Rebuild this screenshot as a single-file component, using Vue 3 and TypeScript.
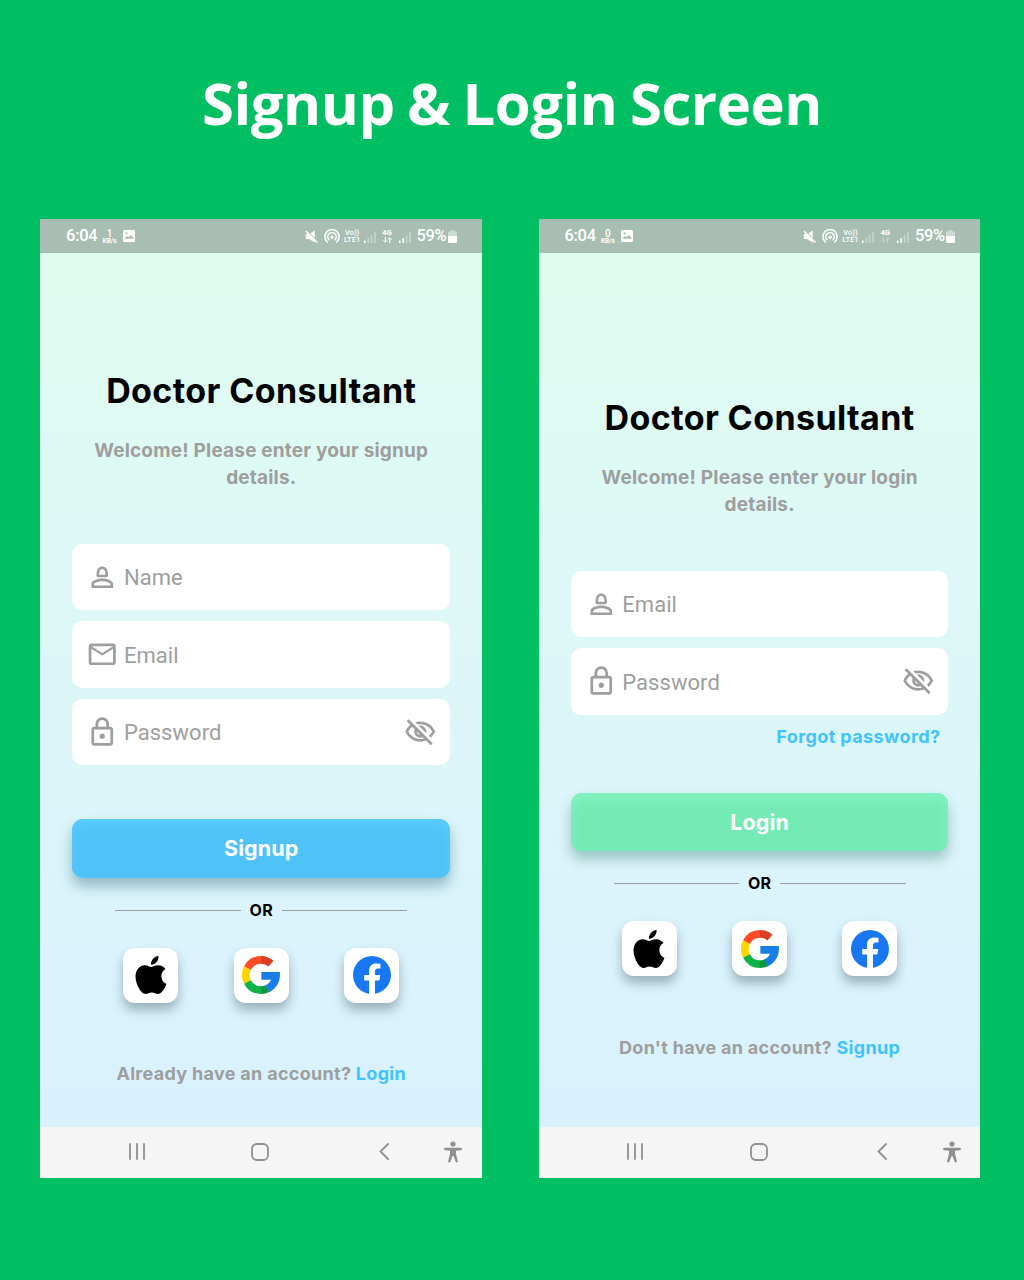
<script setup lang="ts">
interface Field {
  label: string
  icon: 'person' | 'mail' | 'lock'
  secret?: boolean
}

interface Screen {
  id: 'signup' | 'login'
  rate: string
  idleData: boolean
  subtitle: [string, string]
  fields: Field[]
  forgot?: string
  action: string
  question: string
  link: string
}

const screens: Screen[] = [
  {
    id: 'signup',
    rate: '1',
    idleData: false,
    subtitle: ['Welcome! Please enter your signup', 'details.'],
    fields: [
      { label: 'Name', icon: 'person' },
      { label: 'Email', icon: 'mail' },
      { label: 'Password', icon: 'lock', secret: true },
    ],
    action: 'Signup',
    question: 'Already have an account?',
    link: 'Login',
  },
  {
    id: 'login',
    rate: '0',
    idleData: true,
    subtitle: ['Welcome! Please enter your login', 'details.'],
    fields: [
      { label: 'Email', icon: 'person' },
      { label: 'Password', icon: 'lock', secret: true },
    ],
    forgot: 'Forgot password?',
    action: 'Login',
    question: "Don't have an account?",
    link: 'Signup',
  },
]

const glyphs: Record<Field['icon'], string> = {
  person:
    'M12 4C9.6 4 8.1 5.9 7.9 8.4L7.7 10.3C7.6 11.2 8.2 12 9.1 12h5.8c.9 0 1.5-.8 1.4-1.7l-.2-1.9C15.9 5.9 14.4 4 12 4zm0 1.9c1.3 0 2.1 1 2.2 2.6l.2 1.7H9.6l.2-1.7C9.9 6.9 10.700 5.900 12 5.900zM12 13c-2.700 0-8 1.340-8 4v3h16v-3c0-2.660-5.330-4-8-4zm6.100 5.100H5.900V17c0-.64 3.130-2.100 6.100-2.100s6.100 1.460 6.100 2.100v1.100z',
  mail: 'M22 6c0-1.100-.9-2-2-2H4c-1.100 0-2 .9-2 2v12c0 1.100.9 2 2 2h16c1.100 0 2-.9 2-2V6zm-2 0l-8 5-8-5h16zm0 12H4V8l8 5 8-5v10z',
  lock: 'M18 8h-1V6c0-2.760-2.240-5-5-5S7 3.240 7 6v2H6c-1.100 0-2 .9-2 2v10c0 1.100.9 2 2 2h12c1.100 0 2-.9 2-2V10c0-1.100-.9-2-2-2zM9 6c0-1.660 1.340-3 3-3s3 1.340 3 3v2H9V6zm9 14H6V10h12v10zm-6-3c1.100 0 2-.9 2-2s-.9-2-2-2-2 .9-2 2 .9 2 2 2z',
}
</script>

<template>
  <main class="page">
    <h1 class="title">Signup &amp; Login Screen</h1>
    <div class="phones">
      <section v-for="s in screens" :key="s.id" class="phone" :class="s.id">
        <header class="status">
          <span class="clock">6:04</span>
          <span class="rate"><b>{{ s.rate }}</b><i>KB/s</i></span>
          <svg class="photo" viewBox="0 0 12 12">
            <path fill-rule="evenodd" d="M1.500 0h9A1.500 1.500 0 0 1 12 1.500v9a1.500 1.500 0 0 1-1.500 1.500h-9A1.500 1.500 0 0 1 0 10.500v-9A1.500 1.500 0 0 1 1.500 0zM1.600 8.800h8.800V7.600L7.800 5 5.700 7.200 4.200 6 1.600 8.200zM3.500 2.300a1.100 1.100 0 1 0 0 2.200 1.100 1.100 0 0 0 0-2.200z" />
          </svg>
          <svg class="mute" viewBox="0 0 13 13">
            <path d="M.8 4h3.200L9.800.4v12L4 9H.8z" />
            <path d="M2.200.9l10.300 10.500" stroke="#a9beb3" stroke-width="1.100" />
            <path d="M.9.9l11.500 11.600" stroke="#fff" stroke-width="1.400" />
          </svg>
          <svg class="hotspot" viewBox="0 0 16 14" fill="none" stroke="#fff" stroke-width="1.500" stroke-linecap="round">
            <path d="M3.300 13A7.100 7.100 0 1 1 12.700 13" />
            <path d="M5 10.800A4.200 4.200 0 1 1 11 10.800" />
            <circle cx="8" cy="8.200" r="1" fill="#fff" />
          </svg>
          <span class="volte"><i>Vo))</i><i>LTE1</i></span>
          <svg class="bars" viewBox="0 0 12 12">
            <path d="M0 9.500h1.500V12H0z" />
            <path opacity=".38" d="M3.500 7H5v5H3.500zM6.800 4h1.500v8H6.800zM10.300 1h1.500v11h-1.500z" />
          </svg>
          <span class="data">
            <i>4G</i>
            <svg viewBox="0 0 9 6" fill="none" stroke="#fff" :opacity="s.idleData ? 0.4 : 1">
              <path d="M2.300 0v5M.5 3.300l1.800 1.900 1.800-1.900M6.700 6V1M4.900 2.700L6.700.8l1.800 1.900" />
            </svg>
          </span>
          <svg class="bars" viewBox="0 0 12 12">
            <path d="M0 9.500h1.500V12H0zM3.500 7H5v5H3.500z" />
            <path opacity=".38" d="M6.800 4h1.500v8H6.800zM10.300 1h1.500v11h-1.500z" />
          </svg>
          <span class="percent">59%</span>
          <svg class="battery" viewBox="0 0 9 13">
            <path opacity=".42" d="M3 0h3v1.300h1.500Q9 1.300 9 2.800V6H0V2.800Q0 1.300 1.500 1.300H3z" />
            <path d="M0 6h9v5.500Q9 13 7.500 13h-6Q0 13 0 11.500z" />
          </svg>
        </header>

        <div class="body">
          <h2 class="brand">Doctor Consultant</h2>
          <p class="subtitle"><span>{{ s.subtitle[0] }}</span><br />{{ s.subtitle[1] }}</p>

          <div class="fields">
            <div v-for="f in s.fields" :key="f.label" class="field">
              <svg class="icon" viewBox="0 0 24 24"><path fill-rule="evenodd" :d="glyphs[f.icon]" /></svg>
              <span class="label">{{ f.label }}</span>
              <svg v-if="f.secret" class="icon eye" viewBox="0 0 24 24">
                <path d="M12 6c3.790 0 7.170 2.130 8.820 5.500-.59 1.220-1.420 2.270-2.410 3.120l1.410 1.410c1.390-1.230 2.490-2.770 3.180-4.530C21.270 7.110 17 4 12 4c-1.270 0-2.490.2-3.640.57l1.650 1.650C10.660 6.090 11.320 6 12 6zm-1.070 1.140L13 9.210c.57.25 1.030.71 1.280 1.280l2.070 2.070c.08-.34.14-.7.14-1.070C16.500 9.010 14.480 7 12 7c-.37 0-.72.05-1.070.14zM2.010 3.870l2.680 2.680C3.060 7.830 1.770 9.530 1 11.500 2.730 15.890 7 19 12 19c1.520 0 2.980-.29 4.320-.82l3.420 3.420 1.410-1.410L3.420 2.450 2.010 3.870zm7.500 7.500l2.610 2.610c-.04.01-.08.02-.12.02-1.380 0-2.500-1.120-2.500-2.500 0-.05.01-.08.01-.13zm-3.400-3.400l1.750 1.750c-.23.55-.36 1.150-.36 1.780 0 2.480 2.020 4.500 4.500 4.500.63 0 1.230-.13 1.770-.36l.98.98c-.88.24-1.800.38-2.750.38-3.790 0-7.170-2.130-8.820-5.500.7-1.430 1.720-2.610 2.930-3.530z" />
              </svg>
            </div>
          </div>

          <div class="help"><span v-if="s.forgot">{{ s.forgot }}</span></div>

          <div class="action">{{ s.action }}</div>
          <div class="divider"><hr /><span>OR</span><hr /></div>

          <div class="social">
            <div class="tile">
              <svg viewBox="0 0 24 24">
                <path d="M12.152 6.896c-.948 0-2.415-1.078-3.960-1.040-2.040.027-3.910 1.183-4.961 3.014-2.117 3.675-.546 9.103 1.519 12.090 1.013 1.454 2.208 3.090 3.792 3.039 1.520-.065 2.090-.987 3.935-.987 1.831 0 2.350.987 3.960.948 1.637-.026 2.676-1.480 3.676-2.948 1.156-1.688 1.636-3.325 1.662-3.415-.039-.013-3.182-1.221-3.220-4.857-.026-3.040 2.480-4.494 2.597-4.559-1.429-2.090-3.623-2.324-4.390-2.376-2-.156-3.675 1.090-4.610 1.090zM15.530 3.830c.843-1.012 1.400-2.427 1.245-3.830-1.207.052-2.662.805-3.532 1.818-.78.896-1.454 2.338-1.273 3.714 1.338.104 2.715-.688 3.559-1.701" />
              </svg>
            </div>
            <div class="tile">
              <svg viewBox="0 0 114 114" fill="none" stroke-width="23">
                <path stroke="#ffd500" d="M16.500 77.700A45.500 45.500 0 0 1 16.500 36.300" />
                <path stroke="#ff4b26" d="M16.500 36.300A45.500 45.500 0 0 1 57 11.500" />
                <path stroke="#d93f21" d="M57 11.500A45.500 45.500 0 0 1 87 22.800" />
                <path stroke="#0fb244" d="M57 102.500A45.500 45.500 0 0 1 16.500 77.700" />
                <path stroke="#0f993e" d="M77 98A45.500 45.500 0 0 1 57 102.500" />
                <path fill="#167ee6" d="M113.200 48H58v23h29.500A34 34 0 0 1 70 88.500L81.500 108.500A57 57 0 0 0 113.200 48z" />
              </svg>
            </div>
            <div class="tile">
              <svg viewBox="0 0 24 24" fill="#1877f2">
                <path d="M24 12c0-6.627-5.373-12-12-12S0 5.373 0 12c0 5.990 4.388 10.954 10.125 11.854v-8.385H7.078V12h3.047V9.356c0-3.007 1.792-4.669 4.533-4.669 1.312 0 2.686.235 2.686.235v2.953H15.830c-1.491 0-1.956.925-1.956 1.874V12h3.328l-.532 3.470h-2.796v8.385C19.612 22.954 24 17.990 24 12z" />
              </svg>
            </div>
          </div>

          <p class="switch"><span>{{ s.question }}</span> <a>{{ s.link }}</a></p>
        </div>

        <footer class="nav">
          <svg class="recents" viewBox="0 0 16 17"><path d="M1 1v15M8 1v15M15 1v15" /></svg>
          <svg class="home" viewBox="0 0 18 18"><rect x="1" y="1" width="16" height="16" rx="4.800" /></svg>
          <svg class="back" viewBox="0 0 10 17"><path d="M9 1L1.500 8.500 9 16" /></svg>
          <svg class="access" viewBox="0 0 18 22">
            <circle cx="9" cy="3" r="2.600" />
            <path d="M1.300 6.700h15.400a1.200 1.200 0 0 1 0 2.500L12 9.700v3l1.800 7.300a1.150 1.150 0 0 1-2.300.6L9.500 15h-1l-2 5.600a1.150 1.150 0 0 1-2.300-.6L6 12.700v-3L1.300 9.200a1.200 1.200 0 0 1 0-2.500z" />
          </svg>
        </footer>
      </section>
    </div>
  </main>
</template>

<style>
body {
  background: #00bf63;
}
</style>

<style scoped>
.page {
  box-sizing: border-box;
  width: 1024px;
  height: 1280px;
  overflow: hidden;
  background: #00bf63;
  font-family: Inter, Roboto, sans-serif;
}
h1, h2, p, hr {
  margin: 0;
}
i {
  font-style: normal;
}
svg {
  display: block;
  flex: none;
}
.title {
  height: 219px;
  box-sizing: border-box;
  padding-top: 63px;
  color: #fff;
  font: 700 58px/80px "Open Sans", "Noto Sans", sans-serif;
  letter-spacing: -0.45px;
  word-spacing: -2.200px;
  text-align: center;
  white-space: nowrap;
}
.phones {
  display: flex;
  gap: 56.700px;
  padding-left: 40.400px;
}
.phone {
  display: flex;
  flex-direction: column;
  width: 441.700px;
  height: 959px;
  background: #f5f5f5;
}
.status {
  box-sizing: border-box;
  display: flex;
  align-items: center;
  height: 34px;
  padding: 0 0 1px 25.700px;
  background: #a9beb3;
  color: #fff;
  fill: #fff;
  font-family: Roboto, sans-serif;
}
.clock {
  width: 36px;
  font-size: 16.500px;
  font-weight: 500;
  letter-spacing: -0.3px;
}
.rate {
  display: flex;
  flex-direction: column;
  align-items: center;
  width: 15px;
  margin-right: 6px;
  padding-top: 2px;
}
.rate b {
  font: 500 10px/9px Roboto, sans-serif;
}
.rate i {
  font: 700 6.500px/7px Roboto, sans-serif;
}
.photo {
  width: 12px;
  height: 12px;
  margin: 1px 170px 0 0;
}
.mute {
  width: 13px;
  height: 13px;
  margin: 1px 5.500px 0 0;
}
.hotspot {
  width: 16px;
  height: 14px;
  margin-right: 4px;
}
.volte {
  display: flex;
  flex-direction: column;
  align-items: center;
  width: 17px;
  margin-right: 3.500px;
  padding-top: 1px;
  font: 500 7.500px/7px Roboto, sans-serif;
}
.bars {
  width: 12px;
  height: 12px;
  margin-top: 2px;
}
.data {
  display: flex;
  flex-direction: column;
  align-items: center;
  gap: 1px;
  width: 11px;
  margin: 1px 6px 0 5.500px;
  font: 700 7.500px/7px Roboto, sans-serif;
}
.data svg {
  width: 9px;
  height: 6px;
}
.percent {
  margin-left: 6px;
  width: 31.500px;
  font-size: 16.500px;
  font-weight: 500;
  letter-spacing: -0.4px;
}
.battery {
  width: 9px;
  height: 13px;
  margin-top: 2px;
}
.body {
  box-sizing: border-box;
  display: flex;
  flex-direction: column;
  align-items: stretch;
  height: 874px;
  padding: 118px 32px 0;
  background: linear-gradient(#dffcf0, #d9f1ff);
  text-align: center;
  white-space: nowrap;
}
.login .body {
  padding-top: 145px;
}
.brand {
  color: #000;
  font-size: 34px;
  font-weight: 700;
  line-height: 40px;
  letter-spacing: 0.4px;
}
.subtitle {
  margin-top: 25.500px;
  color: #9e9e9e;
  font-size: 19px;
  font-weight: 700;
  line-height: 27px;
  letter-spacing: 0.19px;
}
.fields {
  display: flex;
  flex-direction: column;
  gap: 11px;
  margin-top: 53.300px;
}
.field {
  box-sizing: border-box;
  display: flex;
  align-items: center;
  height: 66.500px;
  padding: 0 13.500px 0 14px;
  border-radius: 10px;
  background: #fff;
}
.icon {
  width: 32.500px;
  height: 32.500px;
  fill: #9e9e9e;
}
.label {
  margin-left: 5px;
  padding-top: 2px;
  color: #9e9e9e;
  font: 400 22px/30px Roboto, sans-serif;
  letter-spacing: 0.05px;
}
.eye {
  margin-left: auto;
}
.help {
  height: 54px;
}
.login .help {
  box-sizing: border-box;
  height: 78px;
  padding: 8px 8px 0 0;
  color: #40c4ff;
  font-size: 18px;
  font-weight: 700;
  line-height: 27px;
  letter-spacing: 0.4px;
  text-align: right;
}
.action {
  height: 58.500px;
  border-radius: 11px;
  background: #4fc3f7;
  box-shadow: 0 8px 13px rgba(20, 80, 105, 0.36), inset 0 7px 12px rgba(98, 208, 255, 0.6);
  color: #fff;
  font-size: 21.500px;
  font-weight: 700;
  line-height: 59.500px;
  letter-spacing: 0.1px;
}
.login .action {
  background: #74ebb4;
  box-shadow: 0 8px 13px rgba(20, 100, 75, 0.33), inset 0 7px 12px rgba(138, 246, 198, 0.65);
}
.divider {
  display: flex;
  align-items: center;
  justify-content: center;
  height: 20px;
  margin-top: 22.300px;
  font-size: 16px;
  font-weight: 700;
  letter-spacing: 0.3px;
}
.divider span {
  width: 41px;
  padding-bottom: 0.500px;
}
.divider hr {
  width: 125.500px;
  height: 1px;
  border: 0;
  background: #9e9e9e;
}
.social {
  display: flex;
  justify-content: center;
  gap: 55.300px;
  margin-top: 27.500px;
}
.tile {
  display: flex;
  align-items: center;
  justify-content: center;
  width: 55px;
  height: 55px;
  border-radius: 12px;
  background: #fff;
  box-shadow: 0 7px 11px rgba(40, 60, 70, 0.36);
}
.tile svg {
  width: 38px;
  height: 38px;
}
.switch {
  margin-top: 57.500px;
  color: #9e9e9e;
  font-size: 18px;
  font-weight: 700;
  line-height: 27px;
  letter-spacing: 0.3px;
}
.switch a {
  color: #40c4ff;
}
.nav {
  box-sizing: border-box;
  display: flex;
  align-items: center;
  height: 51px;
  padding: 0 0 2px 88.500px;
  fill: none;
  stroke: #909090;
  stroke-width: 1.800;
  stroke-linecap: round;
}
.recents {
  width: 16px;
  height: 17px;
  margin-right: 106.500px;
}
.home {
  width: 18px;
  height: 18px;
  margin-right: 109.500px;
}
.back {
  width: 10px;
  height: 17px;
  margin-right: 55.500px;
}
.access {
  width: 18px;
  height: 22px;
  margin-top: 1px;
  fill: #909090;
  stroke: none;
}
</style>
